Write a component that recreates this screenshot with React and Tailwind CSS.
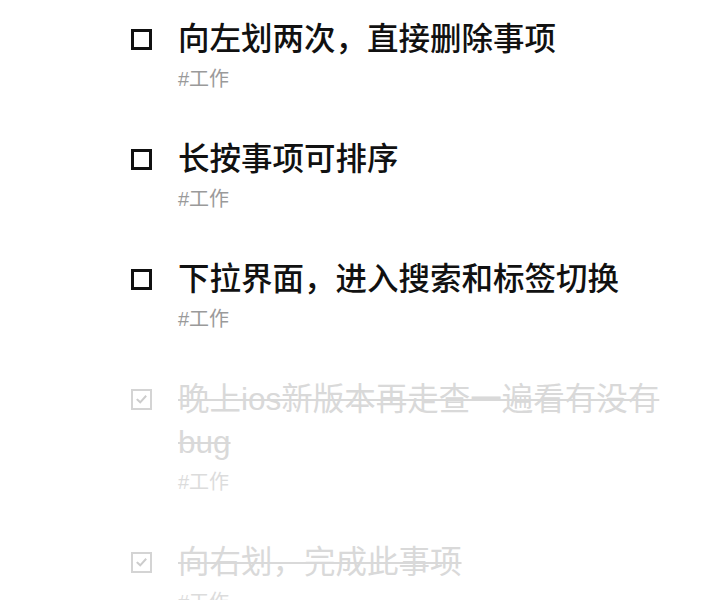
import React from "react";

const items = [
  { title: "向左划两次，直接删除事项", done: false },
  { title: "长按事项可排序", done: false },
  { title: "下拉界面，进入搜索和标签切换", done: false },
  { title: "晚上ios新版本再走查一遍看有没有bug", done: true },
  { title: "向右划，完成此事项", done: true },
];

function Box({ done }) {
  if (!done) {
    return <div className="w-[21px] h-[21px] border-[3px] border-[#111] mt-[11px] shrink-0" />;
  }
  return (
    <div className="w-[21px] h-[21px] border-[2px] border-[#d4d4d4] mt-[11px] shrink-0 flex items-center justify-center">
      <svg width="13" height="13" viewBox="0 0 13 13" fill="none">
        <path d="M2.5 6.8 L5.2 9.3 L10.5 3.5" stroke="#cccccc" strokeWidth="2" strokeLinecap="square" />
      </svg>
    </div>
  );
}

export default function App() {
  return (
    <div
      className="w-[721px] h-[600px] bg-white overflow-hidden pt-[18px] pl-[131px] pr-[45px]"
      style={{ fontFamily: '"Liberation Sans", "Noto Sans CJK SC", sans-serif' }}
    >
      <div className="flex flex-col gap-[42px]">
        {items.map((it, i) => (
          <div key={i} className="flex items-start gap-[26px]">
            <Box done={it.done} />
            <div className="flex flex-col">
              <div
                className={
                  "text-[31.5px] leading-[43px] " +
                  (it.done ? "text-[#d9d9d9] line-through decoration-[2px]" : "text-[#111] font-medium")
                }
              >
                {it.title}
              </div>
              <div className={"mt-[2px] text-[20px] leading-[33px] " + (it.done ? "text-[#dcdcdc]" : "text-[#9a9a9a]")}>
                #工作
              </div>
            </div>
          </div>
        ))}
      </div>
    </div>
  );
}
